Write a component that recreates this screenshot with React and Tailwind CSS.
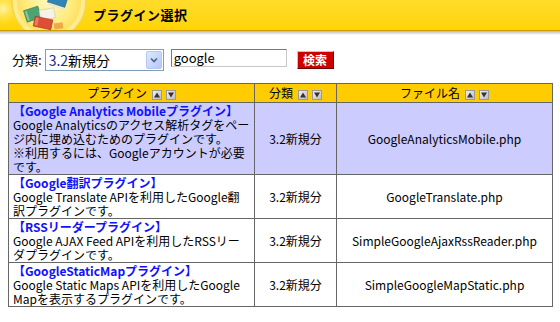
import React from "react";

const F = { fontFamily: '"Noto Sans CJK JP", "Noto Sans", sans-serif' };

function SortIcons() {
  return (
    <span className="inline-flex items-center gap-[4px] ml-[5px] align-middle">
      <svg width="10" height="10" viewBox="0 0 10 10">
        <defs>
          <linearGradient id="sg1" x1="0" y1="0" x2="1" y2="1">
            <stop offset="0" stopColor="#f4f4f4" />
            <stop offset="1" stopColor="#b8b8b8" />
          </linearGradient>
        </defs>
        <rect x="0.5" y="0.5" width="9" height="9" fill="url(#sg1)" stroke="#9a9a9a" />
        <path d="M2 7.5 L5 2.5 L8 7.5 Z" fill="#333" />
      </svg>
      <svg width="10" height="10" viewBox="0 0 10 10">
        <rect x="0.5" y="0.5" width="9" height="9" fill="url(#sg1)" stroke="#9a9a9a" />
        <path d="M2 2.5 L5 7.5 L8 2.5 Z" fill="#333" />
      </svg>
    </span>
  );
}

function Logo() {
  return (
    <svg width="100" height="30" viewBox="0 0 100 30" className="absolute left-0 top-0">
      <defs>
        <radialGradient id="lg" cx="0.5" cy="0.5" r="0.5">
          <stop offset="0" stopColor="#fff8c0" />
          <stop offset="0.7" stopColor="#ffec80" />
          <stop offset="1" stopColor="#ffe060" />
        </radialGradient>
        <radialGradient id="glow" cx="0.1" cy="0.3" r="0.7">
          <stop offset="0" stopColor="#fff3a8" />
          <stop offset="1" stopColor="#ffd700" stopOpacity="0" />
        </radialGradient>
      </defs>
      <rect x="0" y="0" width="30" height="30" fill="url(#glow)" />
      <circle cx="49" cy="2" r="37" fill="#ffeb90" stroke="#f7d448" strokeWidth="1.5" />
      <circle cx="49" cy="2" r="32" fill="url(#lg)" />
      {/* green book */}
      <g transform="rotate(-18 33 14)">
        <rect x="25" y="8" width="15" height="12" fill="#4ea371" stroke="#2f7a4e" strokeWidth="0.6" />
        <rect x="26" y="9" width="2" height="10" fill="#82c79a" />
      </g>
      {/* blue book */}
      <g transform="rotate(18 57 2)">
        <rect x="48" y="-7" width="18" height="12" fill="#2f86b5" stroke="#1d5f85" strokeWidth="0.6" />
        <rect x="49" y="5" width="17" height="2.5" fill="#ece6cc" />
      </g>
      {/* white book */}
      <g transform="rotate(-10 47 15)">
        <rect x="40" y="9" width="15" height="10" fill="#f6f2e4" stroke="#cbc2a2" strokeWidth="0.5" />
      </g>
      {/* red book */}
      <g transform="rotate(12 43 23)">
        <rect x="34" y="18" width="18" height="10" fill="#dc4f36" stroke="#a83220" strokeWidth="0.6" />
        <rect x="35" y="19" width="3" height="8" fill="#ef7a60" />
      </g>
      <rect x="54" y="23" width="9" height="6" fill="#f0a848" transform="rotate(-8 58 26)" />
    </svg>
  );
}

function PluginCell({ title, lines }) {
  return (
    <td className="border border-[#666] pl-[4px] pr-[2px] pt-[1px] pb-0 align-top whitespace-nowrap overflow-hidden">
      <div className="text-[#1010ff] font-bold">{title}</div>
      {lines.map((l, i) => (
        <div key={i}>{l}</div>
      ))}
    </td>
  );
}

function Row({ bg, title, lines, file }) {
  return (
    <tr className={bg}>
      <PluginCell title={title} lines={lines} />
      <td className="border border-[#666] text-center">3.2新規分</td>
      <td className="border border-[#666] text-center">{file}</td>
    </tr>
  );
}

export default function App() {
  return (
    <div className="w-[560px] h-[322px] bg-white overflow-hidden text-[12px] text-black" style={F}>
      {/* header */}
      <div className="relative h-[30px] bg-gradient-to-b from-[#ffdc2a] to-[#ffd400]">
        <Logo />
        <div className="absolute left-[93px] top-[6px] text-[13px] font-bold leading-[18px] tracking-[0.5px]">
          プラグイン選択
        </div>
      </div>
      <div className="h-[1px] bg-[#c89a00]" />
      <div className="h-[4px] bg-gradient-to-b from-[#b8b8b8] to-white" />

      {/* form */}
      <div className="flex items-start mt-[14px] ml-[12px]">
        <span className="mt-[3px] text-[13px] leading-[16px]">分類:</span>
        <div className="ml-[3px] flex w-[119px] h-[22px] border border-[#7f9db9] bg-white">
          <span className="flex-1 pl-[3px] text-[14px] leading-[20px]">
            <span className="text-[#1a2a8a]">3.2</span>新規分
          </span>
          <span className="w-[16px] h-[18px] mt-[1px] mr-[1px] rounded-[2px] border border-[#b7c8f0] bg-gradient-to-br from-[#dfe9ff] to-[#b3c8f5] flex items-center justify-center">
            <svg width="8" height="6" viewBox="0 0 8 6">
              <path d="M1 1.5 L4 4.5 L7 1.5" fill="none" stroke="#4d6185" strokeWidth="1.6" />
            </svg>
          </span>
        </div>
        <div className="ml-[7px] w-[116px] h-[18px] border border-[#7a7a7a] border-r-[#c8c8c8] border-b-[#c8c8c8] pl-[2px] text-[13px] leading-[15px]">
          google
        </div>
        <div className="ml-[10px] mt-[2px] w-[37px] h-[18px] bg-[#cc0000] border border-[#f0c070] border-r-[#700000] border-b-[#700000] text-white font-bold text-[12px] leading-[15px] text-center">
          検索
        </div>
      </div>

      {/* table */}
      <table className="ml-[8px] mt-[12px] w-[545px] table-fixed border-collapse border border-[#666] text-[12px] leading-[14px]">
        <colgroup>
          <col className="w-[246px]" />
          <col className="w-[82px]" />
          <col />
        </colgroup>
        <thead>
          <tr className="bg-[#ffcc00] h-[19px]">
            <th className="border border-[#666] font-normal text-center p-0">
              プラグイン<SortIcons />
            </th>
            <th className="border border-[#666] font-normal text-center p-0">
              分類<SortIcons />
            </th>
            <th className="border border-[#666] font-normal text-center p-0">
              ファイル名<SortIcons />
            </th>
          </tr>
        </thead>
        <tbody>
          <Row
            bg="bg-[#ccccff]"
            title="【Google Analytics Mobileプラグイン】"
            lines={[
              "Google Analyticsのアクセス解析タグをペー",
              "ジ内に埋め込むためのプラグインです。",
              "※利用するには、Googleアカウントが必要",
              "です。",
            ]}
            file="GoogleAnalyticsMobile.php"
          />
          <Row
            bg="bg-white"
            title="【Google翻訳プラグイン】"
            lines={["Google Translate APIを利用したGoogle翻", "訳プラグインです。"]}
            file="GoogleTranslate.php"
          />
          <Row
            bg="bg-white"
            title="【RSSリーダープラグイン】"
            lines={["Google AJAX Feed APIを利用したRSSリー", "ダプラグインです。"]}
            file="SimpleGoogleAjaxRssReader.php"
          />
          <Row
            bg="bg-white"
            title="【GoogleStaticMapプラグイン】"
            lines={["Google Static Maps APIを利用したGoogle", "Mapを表示するプラグインです。"]}
            file="SimpleGoogleMapStatic.php"
          />
        </tbody>
      </table>
    </div>
  );
}
